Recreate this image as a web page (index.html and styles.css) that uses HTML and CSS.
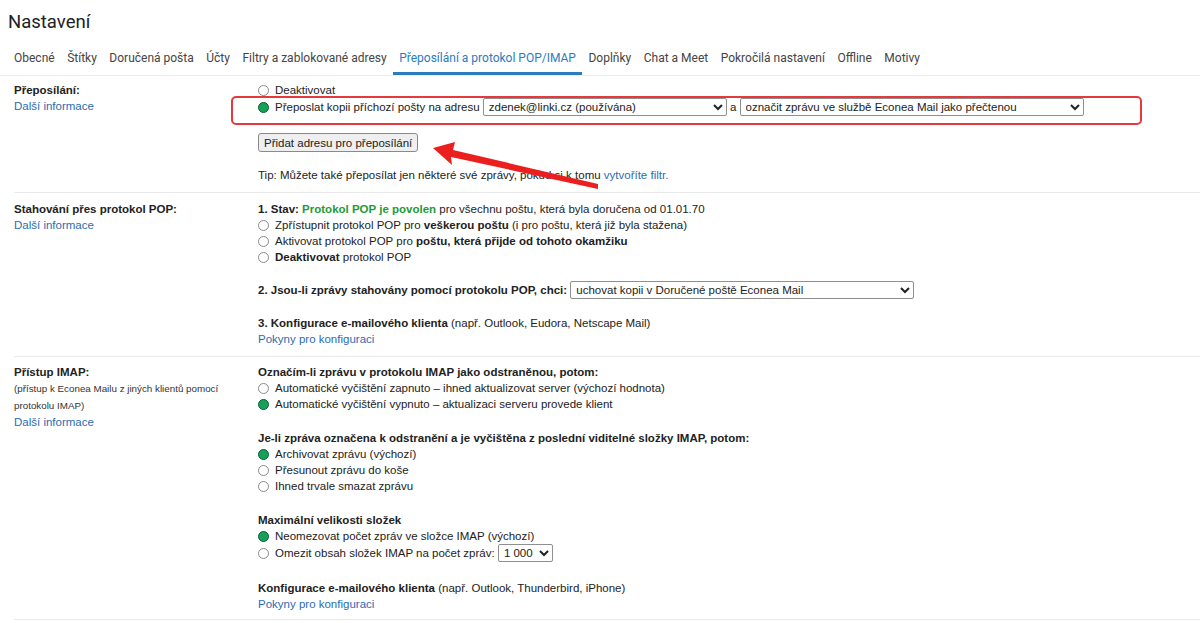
FILE: index.html
```html
<!DOCTYPE html>
<html lang="cs">
<head>
    <meta charset="UTF-8">
    <meta name="viewport" content="width=device-width, initial-scale=1.0">
    <title>Nastavení</title>
    <link rel="stylesheet" href="styles.css">
</head>
<body>
    <h1 class="title">Nastavení</h1>
    <nav class="tabs">
        <a href="#">Obecné</a>
        <a href="#">Štítky</a>
        <a href="#">Doručená pošta</a>
        <a href="#">Účty</a>
        <a href="#">Filtry a zablokované adresy</a>
        <a href="#" class="active">Přeposílání a protokol POP/IMAP</a>
        <a href="#">Doplňky</a>
        <a href="#">Chat a Meet</a>
        <a href="#">Pokročilá nastavení</a>
        <a href="#">Offline</a>
        <a href="#">Motivy</a>
    </nav>

    <div class="settings">
        <section class="row forwarding">
            <div class="label">
                <b>Přeposílání:</b>
                <a href="#">Další informace</a>
            </div>
            <div class="value">
                <div class="opt"><span class="radio"></span>Deaktivovat</div>
                <div class="opt sel-row marked"><span class="radio on"></span>Přeposlat kopii příchozí pošty na adresu <select class="sel sel-addr"><option>zdenek@linki.cz (používána)</option></select> a <select class="sel sel-wide"><option>označit zprávu ve službě Econea Mail jako přečtenou</option></select></div>
                <button class="btn">Přidat adresu pro přeposílání</button>
                <p class="tip">Tip: Můžete také přeposílat jen některé své zprávy, pokud si k tomu <a href="#">vytvoříte filtr.</a></p>
            </div>
            <svg class="arrow" width="176" height="54" viewBox="0 0 176 54">
                <polygon points="5,10 27,4 25,12 170,46 170,51 23,19 24,27" fill="#ec1f1f"/>
            </svg>
        </section>

        <section class="row pop">
            <div class="label">
                <b>Stahování přes protokol POP:</b>
                <a href="#">Další informace</a>
            </div>
            <div class="value">
                <div class="block">
                    <div class="opt"><b>1. Stav: <span class="ok">Protokol POP je povolen</span></b> pro všechnu poštu, která byla doručena od 01.01.70</div>
                    <div class="opt"><span class="radio"></span>Zpřístupnit protokol POP pro <b>veškerou poštu</b> (i pro poštu, která již byla stažena)</div>
                    <div class="opt"><span class="radio"></span>Aktivovat protokol POP pro <b>poštu, která přijde od tohoto okamžiku</b></div>
                    <div class="opt"><span class="radio"></span><b>Deaktivovat</b> protokol POP</div>
                </div>
                <div class="block">
                    <div class="opt sel-row"><b>2. Jsou-li zprávy stahovány pomocí protokolu POP, chci:</b> <select class="sel sel-wide"><option>uchovat kopii v Doručené poště Econea Mail</option></select></div>
                </div>
                <div class="block">
                    <div class="opt"><b>3. Konfigurace e-mailového klienta</b> (např. Outlook, Eudora, Netscape Mail)</div>
                    <div class="opt"><a href="#">Pokyny pro konfiguraci</a></div>
                </div>
            </div>
        </section>

        <section class="row imap">
            <div class="label">
                <b>Přístup IMAP:</b>
                <small>(přístup k Econea Mailu z jiných klientů pomocí protokolu IMAP)</small>
                <a href="#">Další informace</a>
            </div>
            <div class="value">
                <div class="block">
                    <div class="opt"><b>Označím-li zprávu v protokolu IMAP jako odstraněnou, potom:</b></div>
                    <div class="opt"><span class="radio"></span>Automatické vyčištění zapnuto – ihned aktualizovat server (výchozí hodnota)</div>
                    <div class="opt"><span class="radio on"></span>Automatické vyčištění vypnuto – aktualizaci serveru provede klient</div>
                </div>
                <div class="block">
                    <div class="opt"><b>Je-li zpráva označena k odstranění a je vyčištěna z poslední viditelné složky IMAP, potom:</b></div>
                    <div class="opt"><span class="radio on"></span>Archivovat zprávu (výchozí)</div>
                    <div class="opt"><span class="radio"></span>Přesunout zprávu do koše</div>
                    <div class="opt"><span class="radio"></span>Ihned trvale smazat zprávu</div>
                </div>
                <div class="block">
                    <div class="opt"><b>Maximální velikosti složek</b></div>
                    <div class="opt"><span class="radio on"></span>Neomezovat počet zpráv ve složce IMAP (výchozí)</div>
                    <div class="opt sel-row"><span class="radio"></span>Omezit obsah složek IMAP na počet zpráv: <select class="sel sel-num"><option>1 000</option></select></div>
                </div>
                <div class="block">
                    <div class="opt"><b>Konfigurace e-mailového klienta</b> (např. Outlook, Thunderbird, iPhone)</div>
                    <div class="opt"><a href="#">Pokyny pro konfiguraci</a></div>
                </div>
            </div>
        </section>
    </div>
</body>
</html>
```

FILE: styles.css
```css
body {
    margin: 0;
    font-family: "Liberation Sans", Arial, sans-serif;
    font-size: 11.5px;
    color: #222;
    background-color: #fff;
}
a {
    color: #2b6cb3;
    text-decoration: none;
}

.title {
    margin: 0;
    padding: 11px 8px 0;
    font-family: Roboto, "Liberation Sans", sans-serif;
    font-size: 18.5px;
    font-weight: 400;
    line-height: 22px;
    color: #202124;
}

.tabs {
    display: flex;
    margin-top: 9px;
    padding-left: 7.75px;
    border-bottom: 1px solid #ececec;
}
.tabs a {
    padding: 8px 6.25px 6px;
    border-bottom: 3px solid transparent;
    font-family: Roboto, "Liberation Sans", sans-serif;
    font-size: 12px;
    line-height: 16px;
    color: #444;
}
.tabs a.active {
    color: #2b7bc0;
    border-bottom-color: #2b7bc0;
}

.settings {
    margin-left: 14px;
}
.row {
    position: relative;
    display: grid;
    grid-template-columns: 244px 1fr;
    border-bottom: 1px solid #e9e9e9;
}
.label {
    display: flex;
    flex-direction: column;
    align-items: flex-start;
    line-height: 16px;
}
.label small {
    font-size: 9.8px;
    line-height: 17px;
    color: #333;
    max-width: 215px;
}
.opt {
    line-height: 16px;
    white-space: nowrap;
}
.radio {
    display: inline-block;
    width: 9px;
    height: 9px;
    margin-right: 6px;
    border: 1px solid #8a8a8a;
    border-radius: 50%;
    background-color: #fff;
    vertical-align: -2px;
}
.radio.on {
    background-color: #17a058;
    border-color: #0b5c33;
}
.ok {
    color: #1e9b34;
}

.sel-row {
    height: 18px;
    line-height: 18px;
}
.sel {
    height: 18px;
    padding: 0 1px;
    border: 1px solid #8f8f8f;
    border-radius: 2px;
    background-color: #fff;
    font-family: "Liberation Sans", Arial, sans-serif;
    font-size: 11.5px;
    color: #222;
    vertical-align: top;
}
.sel-addr {
    width: 244px;
}
.sel-wide {
    width: 344px;
}
.sel-num {
    width: 55px;
}

.forwarding {
    padding: 6px 0 9px;
}
.btn {
    display: block;
    height: 19px;
    margin-top: 17px;
    padding: 0 5px;
    border: 1px solid #8a8a8a;
    border-radius: 3px;
    background-color: #efefef;
    font-family: "Liberation Sans", Arial, sans-serif;
    font-size: 11.5px;
    color: #222;
}
.tip {
    margin: 15px 0 0;
    line-height: 16px;
}

.marked {
    position: relative;
}
.marked::after {
    content: "";
    position: absolute;
    left: -27px;
    right: 58px;
    top: -2px;
    bottom: -9px;
    border: 2px solid #e6393c;
    border-radius: 5px;
}
.arrow {
    position: absolute;
    left: 414px;
    top: 62px;
}

.pop {
    padding: 8px 0 9px;
}
.pop .block + .block {
    margin-top: 16px;
}
.imap {
    padding: 7px 0 7px;
}
.imap .block + .block {
    margin-top: 18px;
}
```
